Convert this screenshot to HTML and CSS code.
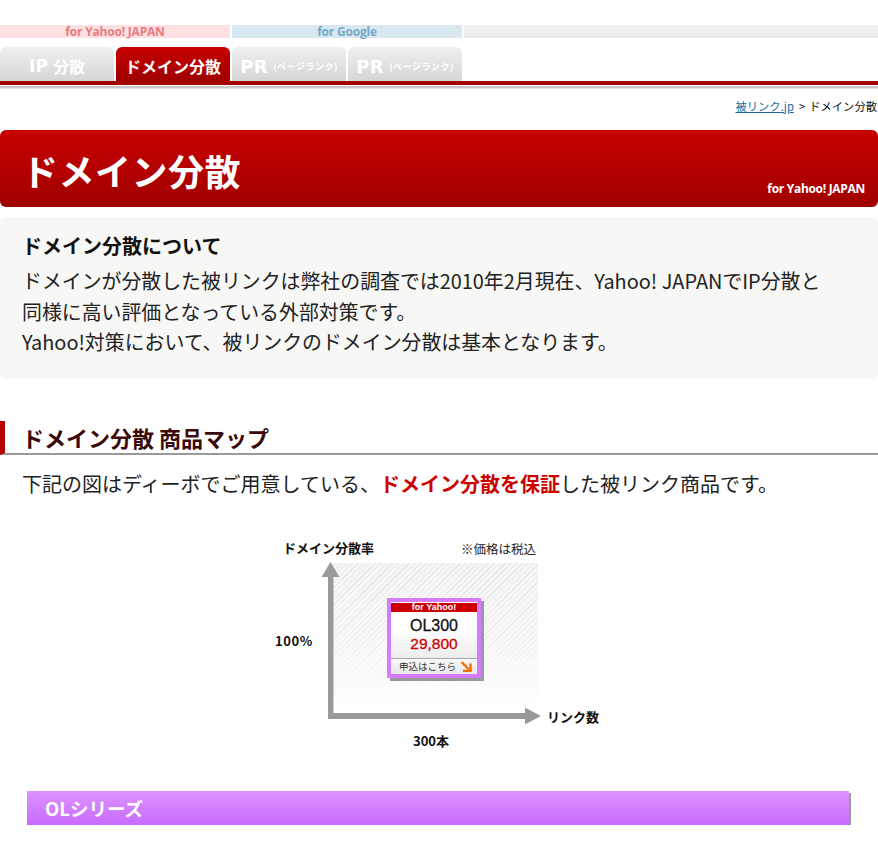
FILE: index.html
```html
<!DOCTYPE html>
<html lang="ja">
<head>
<meta charset="utf-8">
<title>ドメイン分散</title>
<link rel="stylesheet" href="styles.css">
</head>
<body>
<div class="topbar">
  <div class="seg seg-yahoo">for Yahoo! JAPAN</div>
  <div class="seg seg-google">for Google</div>
  <div class="seg seg-rest"></div>
</div>
<div class="tabs">
  <div class="tab"><span class="tab-ip">IP</span><span class="tab-jp">分散</span></div>
  <div class="tab tab-active"><span class="tab-jp">ドメイン分散</span></div>
  <div class="tab"><span class="tab-pr">PR</span><span class="tab-small">(ページランク)</span></div>
  <div class="tab"><span class="tab-pr">PR</span><span class="tab-small">(ページランク)</span></div>
</div>
<div class="redline"></div>
<div class="grayline"></div>

<div class="breadcrumb"><a href="#" class="crumb-link">被リンク.jp</a><span class="crumb-sep">&gt;</span>ドメイン分散</div>

<div class="banner">
  <h1 class="banner-title">ドメイン分散</h1>
  <div class="banner-sub">for Yahoo! JAPAN</div>
</div>

<div class="about">
  <h2 class="about-title">ドメイン分散について</h2>
  <p class="about-text">ドメインが分散した被リンクは弊社の調査では2010年2月現在、Yahoo! JAPANでIP分散と<br>同様に高い評価となっている外部対策です。<br>Yahoo!対策において、被リンクのドメイン分散は基本となります。</p>
</div>

<h2 class="section-title">ドメイン分散 商品マップ</h2>
<p class="lead">下記の図はディーボでご用意している、<strong class="em">ドメイン分散を保証</strong>した被リンク商品です。</p>

<div class="chart">
  <div class="chart-ylabel">ドメイン分散率</div>
  <div class="chart-note">※価格は税込</div>
  <div class="chart-area"></div>
  <svg class="chart-axes" width="340" height="225" viewBox="0 0 340 225">
    <rect x="58" y="45" width="5.5" height="143" fill="#999"/>
    <polygon points="51.5,46 69.5,46 60.5,31" fill="#999"/>
    <rect x="58" y="182" width="199" height="6" fill="#999"/>
    <polygon points="255,176.5 255,193.5 271,185" fill="#999"/>
  </svg>
  <div class="chart-y100">100%</div>
  <div class="chart-xlabel">リンク数</div>
  <div class="chart-x300">300本</div>
  <div class="card">
    <div class="card-head">for Yahoo!</div>
    <div class="card-body">
      <div class="card-name">OL300</div>
      <div class="card-price">29,800</div>
    </div>
    <div class="card-foot">申込はこちら
      <svg class="card-arrow" width="12" height="11" viewBox="0 0 12 11"><path d="M1.5 1 L9 8.5" stroke="#f07000" stroke-width="2.4" fill="none"/><path d="M10.5 2.5 V10 H3" stroke="#f07000" stroke-width="2.4" fill="none"/></svg>
    </div>
  </div>
</div>

<div class="series">OLシリーズ</div>
</body>
</html>
```
FILE: styles.css
```css
html, body {
  margin: 0;
  padding: 0;
  background: #fff;
}
body {
  font-family: "Noto Sans CJK JP", "Noto Sans", sans-serif;
  color: #111;
  overflow-x: hidden;
  width: 878px;
}

/* top bar */
.topbar {
  margin-top: 25px;
  display: flex;
  gap: 2px;
  height: 13px;
}
.seg {
  width: 230px;
  font-family: "Open Sans", "Liberation Sans", sans-serif;
  font-weight: 700;
  font-size: 12px;
  line-height: 13px;
  text-align: center;
  letter-spacing: -0.2px;
}
.seg-yahoo { background: #fde1e2; color: #e97b7f; }
.seg-google { background: #d9e8f0; color: #77a9c9; }
.seg-rest { flex: 1; background: linear-gradient(#f3f3f3, #e9e9e9); }

/* tabs */
.tabs {
  margin-top: 9px;
  display: flex;
  gap: 2px;
  height: 34px;
}
.tab {
  width: 114px;
  height: 34px;
  border-radius: 6px 6px 0 0;
  background: linear-gradient(#efefef, #d6d6d6);
  display: flex;
  align-items: center;
  justify-content: center;
  gap: 5px;
  padding-top: 4px;
  box-sizing: border-box;
  color: #fff;
  font-weight: 700;
}
.tab-active {
  background: linear-gradient(#c90000, #a00000);
}
.tab-ip {
  font-family: "DejaVu Sans", "Liberation Sans", sans-serif;
  font-weight: 700;
  font-size: 17px;
}
.tab-jp {
  font-size: 16px;
  line-height: 20px;
}
.tab-pr {
  font-family: "DejaVu Sans", "Liberation Sans", sans-serif;
  font-weight: 700;
  font-size: 18px;
  letter-spacing: 0.5px;
}
.tab-small {
  font-size: 9px;
  letter-spacing: 0.5px;
}
.redline {
  height: 4px;
  background: #a30000;
}
.grayline {
  margin-top: 1px;
  height: 2px;
  background: #c8c8c8;
  border-bottom: 1px solid #e4e4e4;
}

/* breadcrumb */
.breadcrumb {
  margin-top: 10px;
  margin-right: 1px;
  text-align: right;
  font-size: 11.3px;
  line-height: 14px;
  color: #111;
  white-space: nowrap;
}
.crumb-link {
  color: #1d6a9a;
  text-decoration: underline;
}
.crumb-sep {
  margin: 0 4px 0 5px;
}

/* banner */
.banner {
  margin-top: 17px;
  height: 77px;
  border-radius: 6px;
  background: linear-gradient(#c80000, #a00000);
  display: flex;
  justify-content: space-between;
  align-items: flex-start;
  padding: 0 13px 0 22px;
  box-sizing: border-box;
  color: #fff;
}
.banner-title {
  margin: 0;
  padding-top: 18px;
  font-size: 36px;
  line-height: 44px;
  font-weight: 700;
  letter-spacing: 0.5px;
}
.banner-sub {
  align-self: flex-end;
  margin-bottom: 11px;
  font-family: "Open Sans", "Liberation Sans", sans-serif;
  font-weight: 700;
  font-size: 12px;
  line-height: 14px;
  letter-spacing: -0.3px;
}

/* about box */
.about {
  margin-top: 10px;
  background: #f7f7f5;
  border-radius: 6px;
  padding: 15px 22px 21px;
}
.about-title {
  margin: 0 0 6px;
  font-size: 20px;
  line-height: 28px;
  font-weight: 700;
  color: #111;
}
.about-text {
  margin: 0;
  font-size: 19.9px;
  line-height: 30.5px;
  color: #222;
}

/* section */
.section-title {
  margin: 42px 0 0;
  height: 32px;
  border-left: 5px solid #b80000;
  border-bottom: 2px solid #9a9a9a;
  padding-left: 17px;
  font-size: 22px;
  line-height: 32px;
  font-weight: 700;
  color: #3a0a0a;
}
.lead {
  margin: 14px 0 0 22px;
  font-size: 20px;
  line-height: 30px;
  color: #222;
}
.em {
  color: #cc0000;
  font-weight: 700;
}

/* chart diagram */
.chart {
  position: relative;
  margin: 32px 0 0 270px;
  width: 340px;
  height: 225px;
}
.chart-ylabel {
  position: absolute;
  left: 13px;
  top: 8px;
  font-size: 13px;
  line-height: 18px;
  font-weight: 700;
  color: #111;
}
.chart-note {
  position: absolute;
  left: 191px;
  top: 9px;
  font-size: 12.5px;
  line-height: 18px;
  color: #222;
}
.chart-area {
  position: absolute;
  left: 61px;
  top: 32px;
  width: 207px;
  height: 148px;
  background:
    linear-gradient(rgba(255,255,255,0) 0%, rgba(255,255,255,0.3) 50%, #fff 100%),
    repeating-linear-gradient(135deg, #f6f6f6 0 3px, #e6e6e6 3px 4px);
}
.chart-axes {
  position: absolute;
  left: 0;
  top: 0;
}
.chart-y100 {
  position: absolute;
  left: 5px;
  top: 101px;
  font-size: 13px;
  line-height: 18px;
  font-weight: 700;
  letter-spacing: 0.6px;
}
.chart-xlabel {
  position: absolute;
  left: 277px;
  top: 177px;
  font-size: 13px;
  line-height: 18px;
  font-weight: 700;
}
.chart-x300 {
  position: absolute;
  left: 143px;
  top: 201px;
  font-size: 13px;
  line-height: 18px;
  font-weight: 700;
}

.card {
  position: absolute;
  left: 117px;
  top: 67px;
  width: 86px;
  height: 72px;
  border: 4px solid #d67dff;
  background: #fff;
  box-shadow: 3px 3px 0 #9a9a9a;
  display: flex;
  flex-direction: column;
  font-family: "Liberation Sans", Arial, sans-serif;
}
.card-head {
  margin-top: 1px;
  height: 9px;
  background: #cc0000;
  color: #fff;
  font-size: 9px;
  font-weight: 700;
  line-height: 9px;
  text-align: center;
}
.card-body {
  flex: 1;
  background: linear-gradient(#fff 40%, #ececec);
  text-align: center;
  border-bottom: 1px solid #a8a8a8;
  padding-top: 5px;
}
.card-name {
  font-size: 16px;
  line-height: 18px;
  color: #111;
  -webkit-text-stroke: 0.3px #111;
}
.card-price {
  font-size: 15.5px;
  line-height: 18px;
  color: #cc0000;
  -webkit-text-stroke: 0.3px #cc0000;
}
.card-foot {
  height: 15px;
  background: linear-gradient(#f8f8f8, #e8e8e8);
  font-family: "Noto Sans CJK JP", sans-serif;
  font-size: 9.5px;
  line-height: 15px;
  color: #333;
  display: flex;
  align-items: center;
  padding-left: 8px;
  gap: 4px;
}
.card-arrow {
  display: block;
}

/* series bar */
.series {
  margin: 35px 0 0 27px;
  width: 822px;
  height: 34px;
  background: linear-gradient(#dd93ff, #c86bff);
  box-shadow: 2px 2px 0 #9a9a9a;
  color: #fff;
  font-weight: 700;
  font-size: 18.5px;
  line-height: 34px;
  padding-left: 18px;
  box-sizing: border-box;
}
```
